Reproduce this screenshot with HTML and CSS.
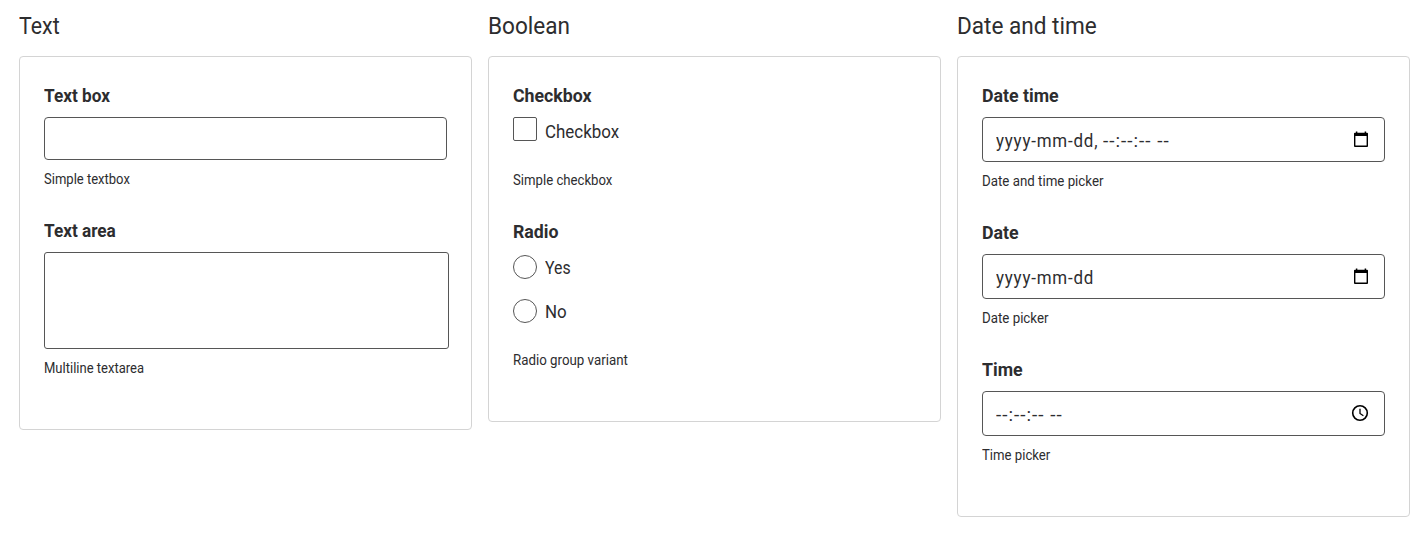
FILE: index.html
```html
<!DOCTYPE html>
<html lang="en">
<head>
<meta charset="utf-8">
<title>Form fields</title>
<link rel="stylesheet" href="styles.css">
</head>
<body>
<main class="columns">
  <section>
    <h2><span class="t t-text">Text</span></h2>
    <div class="card">
      <div class="field">
        <label class="label"><span class="t t-textbox">Text box</span></label>
        <div class="input input-text"></div>
        <p class="hint"><span class="t t-hint-narrow">Simple textbox</span></p>
      </div>
      <div class="field">
        <label class="label"><span class="t t-textbox">Text area</span></label>
        <div class="input input-area"></div>
        <p class="hint"><span class="t t-hint-narrow">Multiline textarea</span></p>
      </div>
    </div>
  </section>
  <section>
    <h2><span class="t">Boolean</span></h2>
    <div class="card">
      <div class="field">
        <label class="label"><span class="t">Checkbox</span></label>
        <div class="option"><span class="box"></span><span class="t">Checkbox</span></div>
        <p class="hint"><span class="t">Simple checkbox</span></p>
      </div>
      <div class="field">
        <label class="label"><span class="t">Radio</span></label>
        <div class="option"><span class="box circle"></span><span class="t t-yes">Yes</span></div>
        <div class="option"><span class="box circle"></span><span class="t">No</span></div>
        <p class="hint"><span class="t t-hint-wide">Radio group variant</span></p>
      </div>
    </div>
  </section>
  <section>
    <h2><span class="t">Date and time</span></h2>
    <div class="card">
      <div class="field">
        <label class="label"><span class="t">Date time</span></label>
        <div class="input input-date">
          <span class="value date-part"><span class="t t-ymd">yyyy-mm-dd,</span></span>
          <span class="value"><span class="t t-hms">--:--:--&nbsp;--</span></span>
          <svg class="icon" viewBox="0 0 18 18"><path d="M4.6 1.5v2M13.4 1.5v2" stroke="#000" stroke-width="1.5"/><path d="M2 3.6q0-.9.9-.9h12.2q.9 0 .9.9v12.5q0 .9-.9.9H2.9q-.9 0-.9-.9zM3.4 6v9.6h11.2V6z" fill="#000" fill-rule="evenodd"/></svg>
        </div>
        <p class="hint"><span class="t t-hint-wide">Date and time picker</span></p>
      </div>
      <div class="field">
        <label class="label"><span class="t">Date</span></label>
        <div class="input input-date">
          <span class="value"><span class="t t-ymd">yyyy-mm-dd</span></span>
          <svg class="icon" viewBox="0 0 18 18"><path d="M4.6 1.5v2M13.4 1.5v2" stroke="#000" stroke-width="1.5"/><path d="M2 3.6q0-.9.9-.9h12.2q.9 0 .9.9v12.5q0 .9-.9.9H2.9q-.9 0-.9-.9zM3.4 6v9.6h11.2V6z" fill="#000" fill-rule="evenodd"/></svg>
        </div>
        <p class="hint"><span class="t t-hint-wide">Date picker</span></p>
      </div>
      <div class="field">
        <label class="label"><span class="t">Time</span></label>
        <div class="input input-date">
          <span class="value"><span class="t t-hms">--:--:--&nbsp;--</span></span>
          <svg class="icon clock" viewBox="0 0 18 18" fill="none" stroke="#000"><circle cx="9" cy="9" r="7.3" stroke-width="1.6"/><path d="M9 4.8v4.7l3.4 2.2" stroke-width="1.3"/></svg>
        </div>
        <p class="hint"><span class="t">Time picker</span></p>
      </div>
    </div>
  </section>
</main>
</body>
</html>
```
FILE: styles.css
```css
* { box-sizing: border-box; }
body {
  margin: 0;
  background: #fff;
  color: #2d2d2f;
  font-family: Roboto, "Liberation Sans", sans-serif;
  font-size: 18px;
}
.columns {
  display: grid;
  grid-template-columns: repeat(3, 453px);
  gap: 16px;
  align-items: start;
  padding: 0 16px 0 19px;
}
h2 {
  margin: 0;
  height: 56px;
  padding-top: 10px;
  font-size: 24px;
  font-weight: 400;
  line-height: 32px;
}
.card {
  border: 1px solid #d4d4d4;
  border-radius: 4px;
  padding: 24px;
}
.t {
  display: inline-block;
  white-space: nowrap;
  transform-origin: 0 50%;
  transform: scaleX(.94);
}
.label {
  display: block;
  height: 36px;
  line-height: 30px;
  font-weight: 700;
}
.label .t { transform: scaleX(.985); }
.label .t-textbox { transform: scaleX(.955); }
.t-text { transform: scaleX(.89); }
.t-yes { transform: scaleX(.88); }
.t-hint-narrow { transform: scaleX(.93); }
.t-hint-wide { transform: scaleX(.95); }
.t-ymd { letter-spacing: .85px; }
.t-hms { transform: scaleX(1.05); letter-spacing: .95px; }
.input {
  width: 403px;
  border: 1px solid #565656;
  border-radius: 4px;
}
.input-text { height: 43px; }
.input-area { width: 405px; height: 97px; border-radius: 3px; }
.input-date {
  display: flex;
  align-items: center;
  height: 45px;
  padding: 0 14px 0 13px;
}
.value { padding-top: 2px; line-height: 24px; }
.date-part { width: 107px; }
.icon { width: 18px; height: 18px; margin: 0 0 1px auto; }
.clock { margin-right: 1.5px; }
.hint {
  margin: 7px 0 25px;
  font-size: 14px;
  line-height: 24px;
}
.option {
  display: flex;
  gap: 8px;
  height: 44px;
  line-height: 30px;
}
.box {
  width: 24px;
  height: 24px;
  border: 1px solid #565656;
  border-radius: 2px;
}
.circle { margin-top: 2px; border-radius: 50%; }
```
